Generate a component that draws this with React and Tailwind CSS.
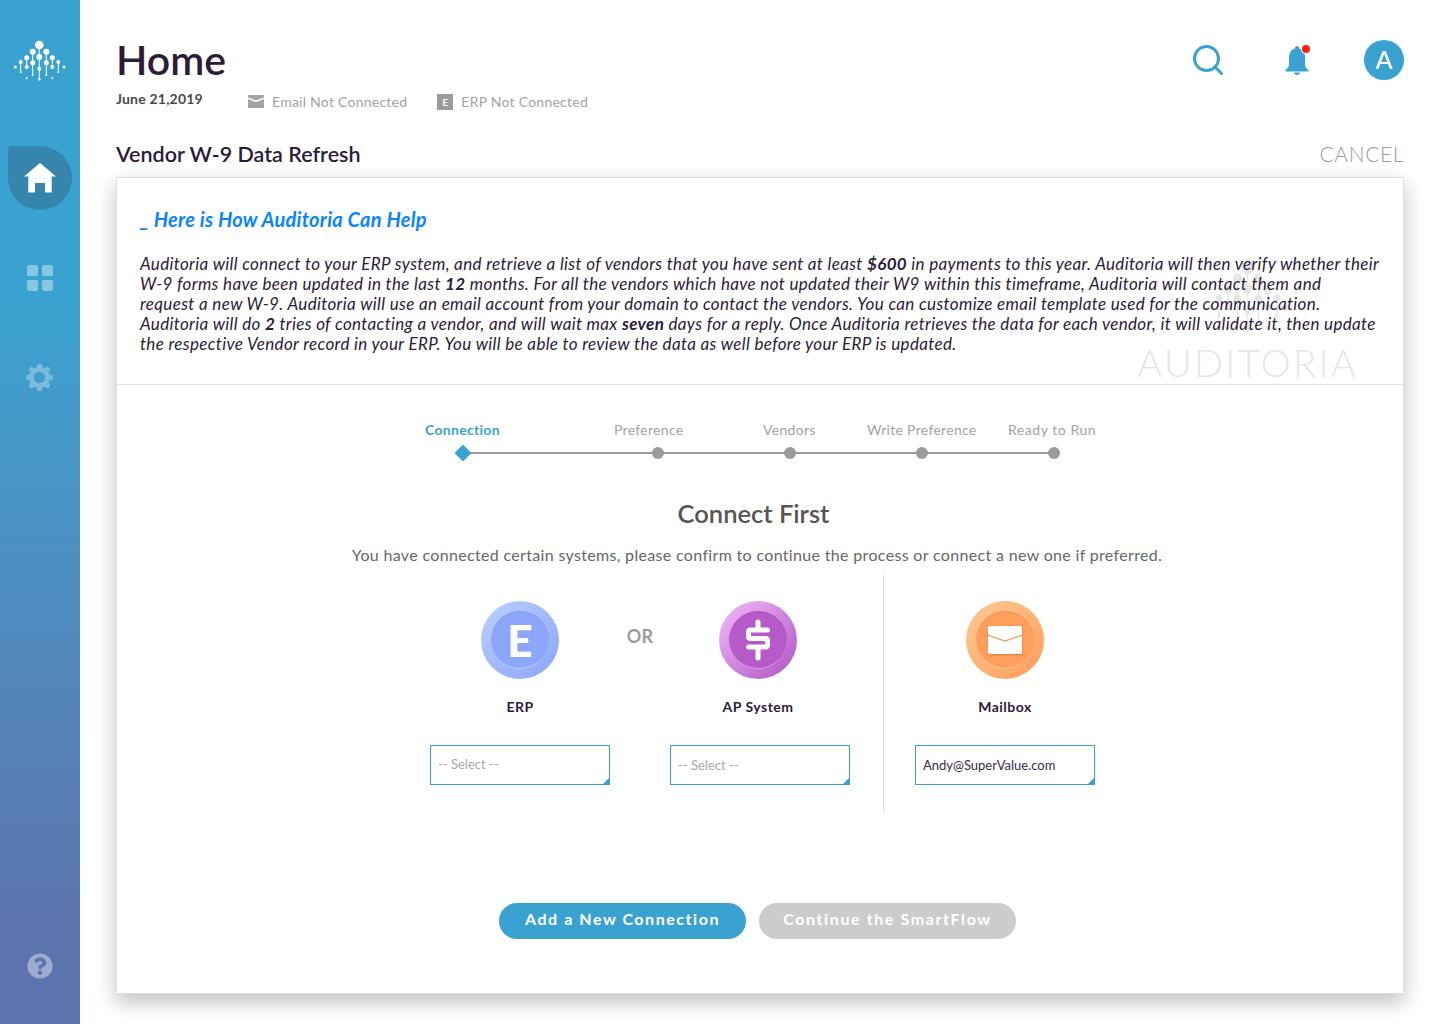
import { Search } from 'lucide-react';
import { FaQuestionCircle } from 'react-icons/fa';

const dots = [
  [39.3, 44, 4.3], [32.7, 50.7, 3], [46.3, 50.7, 3], [39.3, 56, 3], [26.7, 56.7, 2.5], [52.3, 56.7, 2.5],
  [32.7, 61.7, 2.5], [46.3, 61.7, 2.5], [20.7, 61, 2], [58.3, 61, 2], [39.3, 67.7, 2], [26.7, 66, 2],
  [52.3, 66, 2], [15.3, 66, 1.5], [64, 66, 1.5], [39.3, 78.3, 1.3], [26.7, 77.3, 1], [52.3, 77.3, 1],
  [20.7, 71, 1], [58.3, 71, 1], [32.7, 74, 1], [46.3, 74, 1],
];

const stems = [
  [39.3, 44, 78.3], [32.7, 50.7, 74], [46.3, 50.7, 74], [26.7, 56.7, 66], [52.3, 56.7, 66], [20.7, 61, 71], [58.3, 61, 71],
];

function Logo({ className, fill = '#ffffff', stretch }) {
  return (
    <svg className={className} viewBox="13 39 53 42" fill={fill} preserveAspectRatio={stretch ? 'none' : undefined}>
      {stems.map(([x, y1, y2]) => (
        <line key={x} x1={x} y1={y1} x2={x} y2={y2} stroke={fill} strokeWidth="1" />
      ))}
      {dots.map(([cx, cy, r]) => (
        <circle key={`${cx}-${cy}`} cx={cx} cy={cy} r={r} />
      ))}
    </svg>
  );
}

function GearIcon({ className }) {
  const angles = [0, 45, 90, 135, 180, 225, 270, 315];
  return (
    <svg className={className} viewBox="0 0 27 27" fill="#ffffff">
      <circle cx="13.5" cy="13.5" r="8.2" fill="none" stroke="#ffffff" strokeWidth="5" />
      {angles.map((a) => (
        <rect key={a} x="11" y="0" width="5" height="5" rx="1.6" transform={`rotate(${a} 13.5 13.5)`} />
      ))}
    </svg>
  );
}

function Sidebar() {
  return (
    <aside className="w-20 shrink-0 flex flex-col bg-gradient-to-b from-[#3aa2d0] from-30% to-[#5b74ad] to-90%">
      <div className="h-[146px] flex items-start justify-center pt-10 pr-px">
        <Logo className="w-[53px] h-[42px]" />
      </div>
      <div className="mx-2 h-16 w-16 rounded-tl-[4px] rounded-tr-[32px] rounded-b-[32px] bg-[#3585ad] flex items-center justify-center">
        <svg className="w-8 h-[30px]" viewBox="0 0 32 30" fill="#ffffff">
          <path d="M16 0 L32 13.4 H27.7 V29.4 H21 V20 H11 V29.4 H4.3 V13.4 H0 Z" />
        </svg>
      </div>
      <div className="mt-[55px] flex justify-center">
        <div className="grid grid-cols-2 gap-[4px] w-[26px]">
          <span className="h-[11px] rounded-[2px] bg-white/40" />
          <span className="h-[11px] rounded-[2px] bg-white/40" />
          <span className="h-[11px] rounded-[2px] bg-white/40" />
          <span className="h-[11px] rounded-[2px] bg-white/40" />
        </div>
      </div>
      <div className="mt-[73px] flex justify-center pr-px">
        <GearIcon className="w-[27px] h-[27px] opacity-30" />
      </div>
      <div className="mt-auto mb-[45px] flex justify-center">
        <FaQuestionCircle className="w-[26px] h-[26px] text-white/40" />
      </div>
    </aside>
  );
}

function StatusItem({ icon, label }) {
  return (
    <div className="flex items-center gap-2 text-[14px] tracking-[0.25px] text-[#a3a3a3]">
      {icon}
      <span>{label}</span>
    </div>
  );
}

function Header() {
  return (
    <div className="flex justify-between items-start pt-10">
      <div>
        <h1 className="text-[41px] leading-[40px] font-semibold text-[#2c1b3a]">Home</h1>
        <div className="mt-[8px] flex items-center">
          <div className="w-[132px] mb-[6px] text-[14px] font-bold text-[#4a4a4a] tracking-[0.2px]">June 21,2019</div>
          <StatusItem
            label="Email Not Connected"
            icon={
              <svg className="w-4 h-[13px]" viewBox="0 0 16 13" fill="#a3a3a3">
                <path d="M0 0 H16 V2.4 L8 5.6 L0 2.4 Z M0 4 L8 7.2 L16 4 V13 H0 Z" />
              </svg>
            }
          />
          <div className="w-[30px]" />
          <StatusItem
            label="ERP Not Connected"
            icon={
              <span className="w-4 h-4 bg-[#9b9b9b] text-white text-[10px] leading-4 font-bold text-center">E</span>
            }
          />
        </div>
      </div>
      <div className="flex items-center">
        <Search className="w-9 h-9 text-[#3aa2d0]" strokeWidth={2} />
        <div className="relative ml-[59px] mr-[55px]">
          <svg className="w-6 h-[29px] block" viewBox="0 0 24 29" fill="#3aa2d0">
            <path d="M12 0 C13.4 0 14 1 14 2.4 C18 3.4 20 7 20 11 V18 C20 21 21.5 22.8 23.6 24 V25.4 H0.4 V24 C2.5 22.8 4 21 4 18 V11 C4 7 6 3.4 10 2.4 C10 1 10.6 0 12 0 Z M9 26.5 H15 C15 28 13.6 29 12 29 C10.4 29 9 28 9 26.5 Z" />
          </svg>
          <span className="absolute -top-[1px] -right-[1px] w-2 h-2 rounded-full bg-[#f5220f] ring-1 ring-white" />
        </div>
        <div className="w-10 h-10 rounded-full bg-[#3aa2d0] text-white text-[25px] font-medium flex items-center justify-center">A</div>
      </div>
    </div>
  );
}

function Stepper() {
  const steps = [
    { label: 'Preference', width: 'w-[190px]' },
    { label: 'Vendors', width: 'w-[133px]' },
    { label: 'Write Preference', width: 'w-[133px]' },
    { label: 'Ready to Run', width: 'w-[133px]' },
  ];
  return (
    <div className="pt-[36px] pl-[308px]">
      <div className="flex text-[14px] leading-[18px] tracking-[0.3px] text-[#a3a3a3]">
        <span className="w-[189px] font-bold text-[#3aa2d0]">Connection</span>
        <span className="w-[149px]">Preference</span>
        <span className="w-[104px]">Vendors</span>
        <span className="w-[141px]">Write Preference</span>
        <span className="tracking-[0.55px]">Ready to Run</span>
      </div>
      <div className="mt-[7px] ml-[32px] flex items-center h-[14px]">
        <span className="w-[12px] h-[12px] rotate-45 bg-[#3aa2d0] rounded-[1px] shrink-0 z-10" />
        {steps.map((s) => (
          <div key={s.label} className={`${s.width} flex items-center justify-end h-[2px] bg-[#9b9b9b] -ml-px`}>
            <span className="w-3 h-3 rounded-full bg-[#9b9b9b] shrink-0 -mr-[6px]" />
          </div>
        ))}
      </div>
    </div>
  );
}

function SelectBox({ children, muted, nudge }) {
  return (
    <div className={`relative h-10 w-[180px] border border-[#3aa2d0] flex items-center pl-[7px] text-[13px] ${nudge ? 'pt-[2px]' : ''} ${muted ? 'text-[#a8a8a8]' : 'text-[#3a2b48]'}`}>
      {children}
      <span className="absolute right-0 bottom-0 w-[6px] h-[6px] bg-[#3aa2d0] [clip-path:polygon(100%_0,100%_100%,0_100%)]" />
    </div>
  );
}

function Source({ label, outer, inner, icon, value, muted, nudge, shift }) {
  return (
    <div className="w-[180px] pt-[26px] flex flex-col items-center">
      <div className={`flex flex-col items-center ${shift ? 'pr-[4px]' : ''}`}>
        <div className={`w-[78px] h-[78px] rounded-full flex items-center justify-center ${outer}`}>
          <div className={`w-[58px] h-[58px] rounded-full flex items-center justify-center border-b border-white/40 shadow-[inset_0_1px_1px_rgba(0,0,0,0.08)] ${inner}`}>
            {icon}
          </div>
        </div>
        <div className="mt-[19px] h-[18px] text-[14px] leading-[18px] font-bold tracking-[0.5px] text-[#2c1b3a]">{label}</div>
      </div>
      <div className="mt-[29px]">
        <SelectBox muted={muted} nudge={nudge}>{value}</SelectBox>
      </div>
    </div>
  );
}

function Connections() {
  return (
    <div className="mt-[10px] pl-[313px] flex h-[236px]">
      <Source
        label="ERP"
        outer="bg-gradient-to-br from-[#bccffd] to-[#89a5fb]"
        inner="bg-[#8ba6fb]"
        muted
        value="-- Select --"
        icon={<span className="text-white text-[44px] leading-none font-black">E</span>}
      />
      <div className="w-[60px] pt-[50px] text-center text-[18px] leading-[22px] font-bold tracking-[0.3px] text-[#9b9b9b]">OR</div>
      <Source
        label="AP System"
        outer="bg-gradient-to-br from-[#f2bbfb] to-[#af52c2]"
        inner="bg-[#b65ac9]"
        muted
        nudge
        shift
        value="-- Select --"
        icon={
          <svg className="w-[26px] h-[42px]" viewBox="0 0 26 42" fill="none" stroke="#ffffff" strokeWidth="5" strokeLinecap="round" strokeLinejoin="round">
            <path d="M13 3 V9 M22.5 11 H5.5 C4 11 3.5 11.8 3.5 13 V17.5 C3.5 18.7 4 19.5 5.5 19.5 H20.5 C22 19.5 22.5 20.2 22.5 21.5 V25.5 C22.5 27 22 28 20.5 28 H3.5 M13 30 V39" />
          </svg>
        }
      />
      <div className="ml-[33px] mr-[31px] w-px bg-[#dddddd]" />
      <Source
        label="Mailbox"
        outer="bg-gradient-to-br from-[#fdcb95] to-[#fe9b58]"
        inner="bg-[#fe9f5e]"
        nudge
        value="Andy@SuperValue.com"
        icon={
          <svg className="w-[34px] h-[28px] drop-shadow-[0_1px_1px_rgba(190,90,30,0.5)]" viewBox="0 0 34 28">
            <rect width="34" height="28" rx="2.5" fill="#ffffff" />
            <path d="M0 9 L17 15 L34 9" fill="none" stroke="#f09a5c" strokeWidth="1.2" />
          </svg>
        }
      />
    </div>
  );
}

function Intro() {
  return (
    <section className="relative h-[207px] border-b border-[#dddddd] px-[23px] pt-[30px]">
      <div className="absolute top-[79px] right-[45px] flex flex-col items-center">
        <Logo className="w-[82px] h-[78px]" fill="#e6e6e6" stretch />
        <div className="mt-[6px] text-[38px] leading-[42px] font-light tracking-[2.4px] text-[#e6e6e6]">AUDITORIA</div>
      </div>
      <h2 className="relative text-[20px] leading-[22px] font-bold italic tracking-[0.25px] text-[#0a84ff]">_ Here is How Auditoria Can Help</h2>
      <p className="relative mt-[24px] text-[17px] leading-5 italic whitespace-nowrap tracking-[0.34px] text-[#2c1b3a]">
        Auditoria will connect to your ERP system, and retrieve a list of vendors that you have sent at least <b>$600</b> in payments to this year. Auditoria will then verify whether their<br />
        W-9 forms have been updated in the last <b>12</b> months. For all the vendors which have not updated their W9 within this timeframe, Auditoria will contact them and<br />
        request a new W-9. Auditoria will use an email account from your domain to contact the vendors. You can customize email template used for the communication.<br />
        Auditoria will do <b>2</b> tries of contacting a vendor, and will wait max <b>seven</b> days for a reply. Once Auditoria retrieves the data for each vendor, it will validate it, then update<br />
        the respective Vendor record in your ERP. You will be able to review the data as well before your ERP is updated.
      </p>
    </section>
  );
}

export default function App() {
  return (
    <div className="flex h-screen w-full overflow-hidden bg-white font-['Lato',sans-serif]">
      <Sidebar />
      <main className="flex-1 px-9">
        <Header />
        <div className="mt-[30px] flex items-end justify-between h-[22px]">
          <h3 className="text-[21.5px] leading-[26px] font-semibold text-[#2c1b3a]">Vendor W-9 Data Refresh</h3>
          <button className="text-[21px] leading-[26px] font-light tracking-[0.6px] text-[#9b9b9b]">CANCEL</button>
        </div>
        <div className="mt-[10px] h-[817px] border border-[#dddddd] bg-white shadow-[0_8px_20px_rgba(0,0,0,0.25)]">
          <Intro />
          <Stepper />
          <div className="mt-[38px] text-center text-[25.5px] leading-[30px] font-semibold text-[#555555] w-[1273px]">Connect First</div>
          <p className="mt-[17px] text-center w-[1280px] text-[16px] leading-5 tracking-[0.33px] text-[#666666]">
            You have connected certain systems, please confirm to continue the process or connect a new one if preferred.
          </p>
          <Connections />
          <div className="mt-[92px] pl-[382px] flex gap-[13px]">
            <button className="h-9 w-[247px] pb-1 rounded-full bg-[#3aa2d0] text-white text-[16px] font-bold tracking-[1.55px]">Add a New Connection</button>
            <button className="h-9 w-[257px] pb-1 rounded-full bg-[#cccccc] text-white text-[16px] font-bold tracking-[1.6px]">Continue the SmartFlow</button>
          </div>
        </div>
      </main>
    </div>
  );
}
